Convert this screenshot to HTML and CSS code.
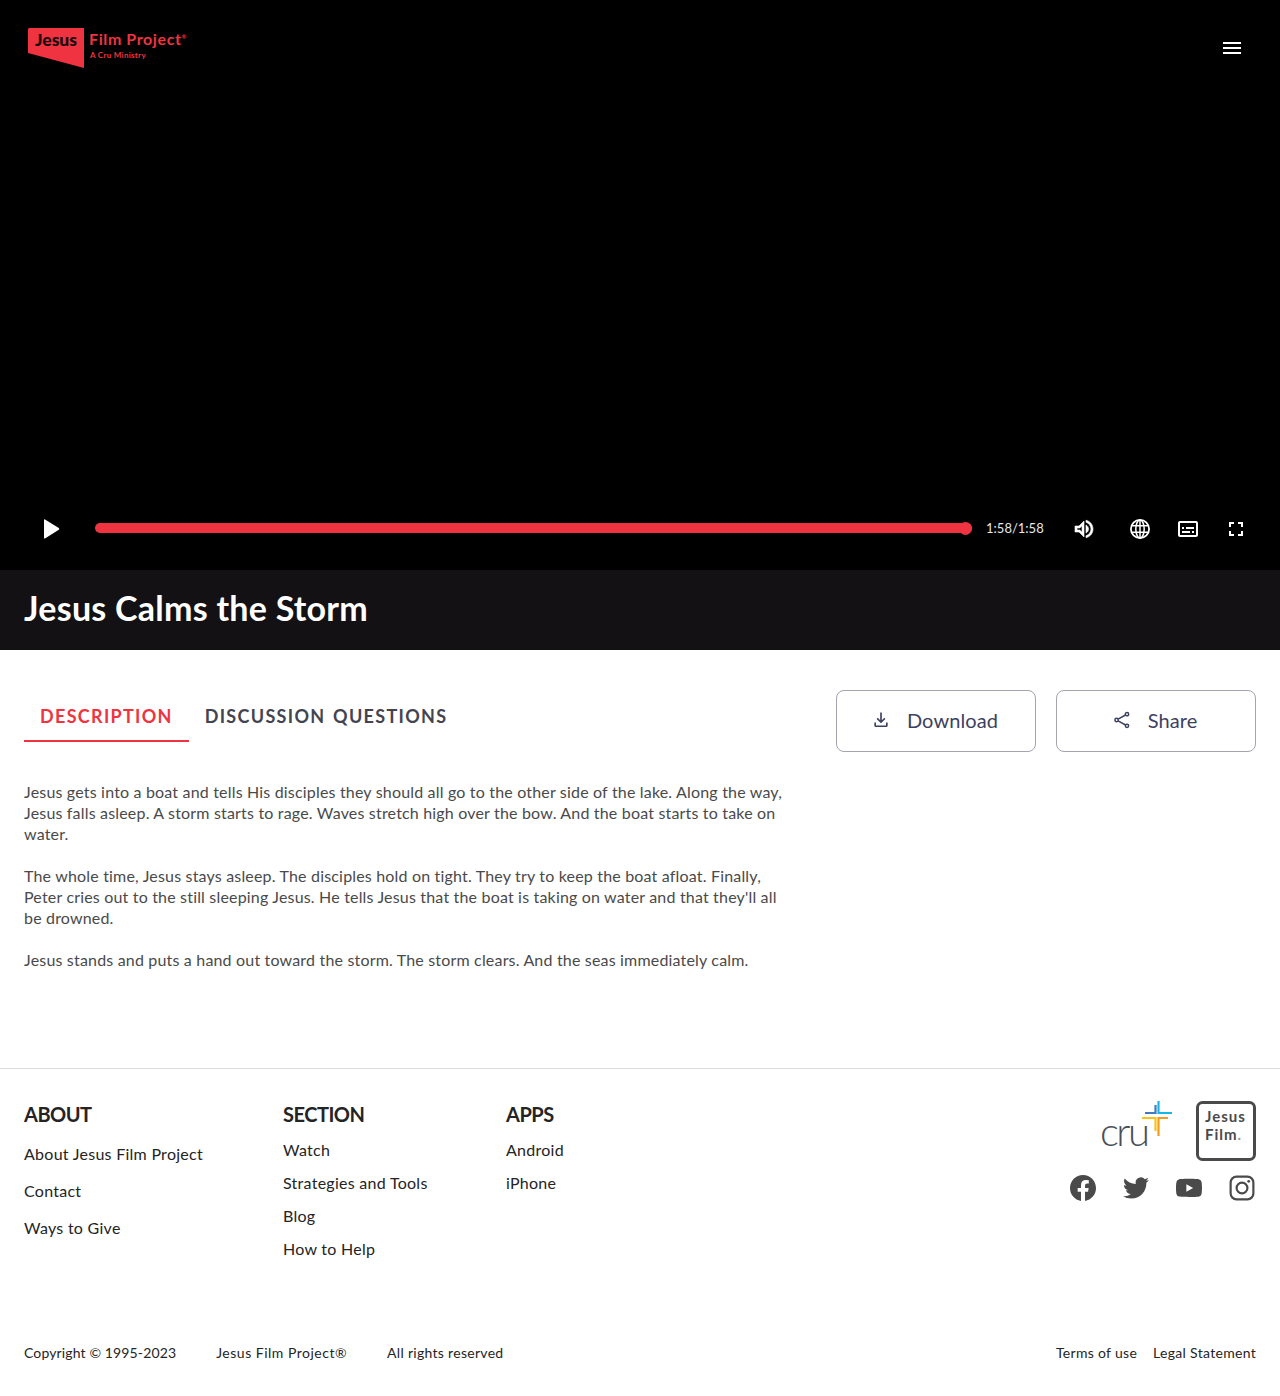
FILE: index.html
```html
<!DOCTYPE html>
<html lang="en">
<head>
    <meta charset="UTF-8">
    <meta name="viewport" content="width=device-width, initial-scale=1.0">
    <title>Jesus Calms the Storm</title>
    <link rel="stylesheet" href="styles.css">
</head>
<body>
    <div class="video">
        <div class="top-bar">
            <a class="logo" href="#">
                <span class="logo-flag"><span class="logo-jesus">Jesus</span></span>
                <span class="logo-text">
                    <span class="logo-name">Film Project<sup>®</sup></span>
                    <span class="logo-sub">A Cru Ministry</span>
                </span>
            </a>
            <button class="icon-btn menu-btn" aria-label="Menu">
                <svg width="24" height="24" viewBox="0 0 24 24" fill="#fff"><path d="M3 18h18v-2H3v2zm0-5h18v-2H3v2zm0-7v2h18V6H3z"/></svg>
            </button>
        </div>
        <div class="controls">
            <button class="icon-btn play-btn" aria-label="Play">
                <svg width="30" height="30" viewBox="0 0 30 30" fill="#fff"><path d="M8 6q0-1.200 1-.6l13.800 8.600q1 .9 0 1.800L9 24.400q-1 .6-1-.6z"/></svg>
            </button>
            <div class="progress"><span class="progress-dot"></span></div>
            <span class="time">1:58/1:58</span>
            <button class="icon-btn volume-btn" aria-label="Volume">
                <svg width="24" height="24" viewBox="0 0 24 24" fill="#fff" stroke="#fff" stroke-width=".6"><path d="M3 9v6h4l5 5V4L7 9H3zm7-.17v6.340L7.830 13H5v-2h2.830L10 8.830zM16.500 12c0-1.770-1.020-3.290-2.500-4.030v8.050c1.480-.73 2.500-2.250 2.500-4.020zM14 3.230v2.060c2.890.86 5 3.540 5 6.710s-2.110 5.850-5 6.710v2.060c4.010-.91 7-4.490 7-8.770 0-4.280-2.990-7.860-7-8.770z"/></svg>
            </button>
            <button class="icon-btn globe-btn" aria-label="Language">
                <svg width="24" height="24" viewBox="0 0 24 24" fill="none" stroke="#fff" stroke-width="1.800"><circle cx="12" cy="12" r="9.100"/><ellipse cx="12" cy="12" rx="4.200" ry="9.100" stroke-width="1.500"/><path d="M3.500 8.800h17M3.500 15.200h17M12 3v18" stroke-width="1.500"/></svg>
            </button>
            <button class="icon-btn cc-btn" aria-label="Subtitles">
                <svg width="24" height="24" viewBox="0 0 24 24" fill="#fff"><path d="M20 4H4c-1.100 0-2 .9-2 2v12c0 1.100.9 2 2 2h16c1.100 0 2-.9 2-2V6c0-1.100-.9-2-2-2zm0 14H4V6h16v12zM6 10h2v2H6v-2zm0 4h8v2H6v-2zm10 0h2v2h-2v-2zm-6-4h8v2h-8v-2z"/></svg>
            </button>
            <button class="icon-btn full-btn" aria-label="Fullscreen">
                <svg width="24" height="24" viewBox="0 0 24 24" fill="#fff"><path d="M7 14H5v5h5v-2H7v-3zm-2-4h2V7h3V5H5v5zm12 7h-3v2h5v-5h-2v3zM14 5v2h3v3h2V5h-5z"/></svg>
            </button>
        </div>
    </div>

    <div class="title-bar">
        <h1>Jesus Calms the Storm</h1>
    </div>

    <div class="content">
        <div class="main-col">
            <div class="tabs">
                <button class="tab tab-active">Description</button>
                <button class="tab">Discussion Questions</button>
            </div>
            <div class="description">
                <p>Jesus gets into a boat and tells His disciples they should all go to the other side of the lake. Along the way, Jesus falls asleep. A storm starts to rage. Waves stretch high over the bow. And the boat starts to take on water.</p>
                <p>The whole time, Jesus stays asleep. The disciples hold on tight. They try to keep the boat afloat. Finally, Peter cries out to the still sleeping Jesus. He tells Jesus that the boat is taking on water and that they'll all be drowned.</p>
                <p>Jesus stands and puts a hand out toward the storm. The storm clears. And the seas immediately calm.</p>
            </div>
        </div>
        <div class="actions">
            <button class="action-btn">
                <svg width="20" height="20" viewBox="0 0 24 24" fill="#3d4160"><path d="M11 3h2v9.200l2.900-2.900 1.400 1.400L12 16l-5.300-5.300 1.400-1.400 2.900 2.900zM4 15h2v3.500h12V15h2v3.700q0 1.800-1.800 1.800H5.800Q4 20.500 4 18.700z"/></svg>
                Download
            </button>
            <button class="action-btn">
                <svg width="20" height="20" viewBox="0 0 24 24" fill="none" stroke="#3d4160" stroke-width="1.800"><circle cx="18" cy="5" r="2"/><circle cx="5.500" cy="12" r="2"/><circle cx="18" cy="19" r="2"/><path d="M7.300 11l9-5M7.300 13l9 5"/></svg>
                Share
            </button>
        </div>
    </div>

    <footer class="footer">
        <div class="footer-top">
            <div class="footer-col col-about">
                <h3>About</h3>
                <ul class="links links-wide">
                    <li>About Jesus Film Project</li>
                    <li>Contact</li>
                    <li>Ways to Give</li>
                </ul>
            </div>
            <div class="footer-col col-section">
                <h3>Section</h3>
                <ul class="links">
                    <li>Watch</li>
                    <li>Strategies and Tools</li>
                    <li>Blog</li>
                    <li>How to Help</li>
                </ul>
            </div>
            <div class="footer-col col-apps">
                <h3>Apps</h3>
                <ul class="links">
                    <li>Android</li>
                    <li>iPhone</li>
                </ul>
            </div>
            <div class="footer-brand">
                <div class="brand-logos">
                    <div class="cru-logo">
                        <span class="cru-word">cru</span>
                        <svg class="cru-cross" width="32" height="38" viewBox="0 0 32 38" fill="none" stroke-width="2.200">
                            <path d="M5 12h10.500V4" stroke="#3d7cc0"/>
                            <path d="M18.500 0v12H32" stroke="#14b8e6"/>
                            <path d="M2 17h13.500v13" stroke="#f9c31c"/>
                            <path d="M18.500 35V17H28" stroke="#f39a1f"/>
                        </svg>
                    </div>
                    <svg class="jf-logo" width="60" height="60" viewBox="0 0 60 60">
                        <rect x="1.500" y="1.500" width="57" height="57" rx="5" fill="none" stroke="#4a4a4a" stroke-width="3"/>
                        <text class="jf-text" x="9" y="21">Jesus</text>
                        <text class="jf-text" x="9" y="39">Film<tspan fill="#999999">.</tspan></text>
                    </svg>
                </div>
                <div class="social">
                    <svg width="26" height="26" viewBox="0 0 24 24" fill="#4a4a4a"><path d="M24 12.070C24 5.400 18.630 0 12 0S0 5.400 0 12.070c0 6.030 4.390 11.020 10.130 11.930v-8.440H7.080v-3.490h3.050V9.410c0-3.020 1.790-4.690 4.530-4.690 1.310 0 2.690.24 2.690.24v2.970h-1.510c-1.490 0-1.960.93-1.960 1.880v2.260h3.330l-.53 3.490h-2.800V24C19.610 23.090 24 18.100 24 12.070z"/></svg>
                    <svg width="26" height="26" viewBox="0 0 24 24" fill="#4a4a4a"><path d="M23.950 4.570a10 10 0 0 1-2.820.77 4.960 4.960 0 0 0 2.160-2.720c-.95.550-2 .96-3.130 1.190a4.920 4.920 0 0 0-8.380 4.480C7.690 8.100 4.070 6.130 1.640 3.160a4.820 4.820 0 0 0-.67 2.480c0 1.710.87 3.210 2.190 4.100a4.900 4.900 0 0 1-2.230-.62v.06a4.920 4.920 0 0 0 3.950 4.830 5 5 0 0 1-2.210.08 4.940 4.940 0 0 0 4.600 3.420A9.870 9.870 0 0 1 0 19.540a14 14 0 0 0 7.560 2.210c9.050 0 14-7.500 14-13.980 0-.21 0-.42-.02-.63a9.940 9.940 0 0 0 2.410-2.570z"/></svg>
                    <svg width="26" height="26" viewBox="0 0 24 24" fill="#4a4a4a"><path d="M23.500 6.190a3.020 3.020 0 0 0-2.120-2.140C19.500 3.550 12 3.550 12 3.550s-7.500 0-9.380.5A3.020 3.020 0 0 0 .5 6.190C0 8.070 0 12 0 12s0 3.930.5 5.810a3.020 3.020 0 0 0 2.120 2.140c1.880.5 9.380.5 9.380.5s7.500 0 9.380-.5a3.020 3.020 0 0 0 2.120-2.140C24 15.930 24 12 24 12s0-3.930-.5-5.810zM9.550 15.570V8.430L15.820 12l-6.270 3.570z"/></svg>
                    <svg width="26" height="26" viewBox="0 0 24 24" fill="none" stroke="#4a4a4a" stroke-width="2"><rect x="1.500" y="1.500" width="21" height="21" rx="5.500"/><circle cx="12" cy="12" r="5"/><circle cx="18.200" cy="5.800" r="1.300" fill="#4a4a4a" stroke="none"/></svg>
                </div>
            </div>
        </div>
        <div class="footer-bottom">
            <span class="legal-item copy">Copyright © 1995-2023</span>
            <span class="legal-item project">Jesus Film Project®</span>
            <span class="legal-item">All rights reserved</span>
            <span class="legal-right">
                <span class="legal-item">Terms of use</span>
                <span class="legal-item">Legal Statement</span>
            </span>
        </div>
    </footer>
</body>
</html>
```

FILE: styles.css
```css
* {
    box-sizing: border-box;
}
body {
    font-family: 'Lato', sans-serif;
    background-color: #ffffff;
    color: #252424;
    margin: 0;
}
button {
    font-family: inherit;
    background: none;
    border: none;
    padding: 0;
    cursor: pointer;
}
.icon-btn {
    display: flex;
    align-items: center;
    justify-content: center;
}
.video {
    height: 570px;
    background-color: #000000;
    display: flex;
    flex-direction: column;
    justify-content: space-between;
}
.top-bar {
    display: flex;
    justify-content: space-between;
    align-items: flex-start;
    padding: 28px 36px 0 28px;
}
.logo {
    display: flex;
    gap: 5px;
    text-decoration: none;
    color: #ef3340;
}
.logo-flag {
    width: 56px;
    height: 40px;
    background-color: #ef3340;
    clip-path: polygon(1px 0, 56px 0, 56px 40px, 0 25px, 0 1px);
    padding-top: 1px;
    text-align: center;
}
.logo-jesus {
    color: #1a0a0c;
    font-size: 17.500px;
    font-weight: 900;
}
.logo-text {
    display: flex;
    flex-direction: column;
}
.logo-name {
    font-size: 16px;
    font-weight: 700;
    line-height: 22px;
    white-space: nowrap;
    letter-spacing: 0.6px;
}
.logo-name sup {
    font-size: 6px;
    line-height: 0;
}
.logo-sub {
    font-size: 8px;
    font-weight: 700;
    line-height: 9px;
    letter-spacing: 0.3px;
    margin: 1px 0 0 1px;
}
.menu-btn {
    margin-top: 8px;
}
.controls {
    display: flex;
    align-items: center;
    height: 82px;
    padding: 0 32px 0 36px;
}
.play-btn {
    width: 30px;
}
.progress {
    width: 878px;
    height: 10px;
    margin: 0 0 2px 29px;
    background-color: #ef3340;
    border-radius: 5px;
    display: flex;
    justify-content: flex-end;
    align-items: center;
}
.progress-dot {
    width: 13px;
    height: 13px;
    border-radius: 50%;
    background-color: #ef3340;
}
.time {
    width: 58px;
    margin: 0 0 2px 14px;
    color: #e8e8e8;
    font-size: 13px;
    white-space: nowrap;
}
.volume-btn {
    margin-left: 28px;
}
.globe-btn {
    margin-left: 32px;
}
.cc-btn,
.full-btn {
    margin-left: 24px;
}
.title-bar {
    height: 80px;
    background-color: #131114;
    padding: 0 24px 5px;
    display: flex;
    align-items: center;
}
.title-bar h1 {
    margin: 0;
    color: #ffffff;
    font-size: 34px;
    font-weight: 700;
    letter-spacing: 0.25px;
}
.content {
    height: 418px;
    display: flex;
    justify-content: space-between;
    padding: 40px 24px 0;
}
.main-col {
    width: 765px;
}
.tabs {
    display: flex;
}
.tab {
    height: 52px;
    padding: 2px 16px 0;
    font-size: 18px;
    font-weight: 700;
    letter-spacing: 1.300px;
    text-transform: uppercase;
    color: #444451;
    word-spacing: 2px;
    border-bottom: 2px solid transparent;
}
.tab-active {
    color: #ef3340;
    border-bottom-color: #ef3340;
}
.description {
    margin-top: 39px;
    color: #4a4a4a;
    font-size: 16px;
    line-height: 21px;
    letter-spacing: 0.18px;
}
.description p {
    margin: 0 0 21px;
}
.actions {
    display: flex;
    gap: 20px;
}
.action-btn {
    width: 200px;
    height: 62px;
    border: 1px solid #a4a3b0;
    border-radius: 8px;
    color: #3d4160;
    font-size: 20px;
    letter-spacing: 0.1px;
    display: flex;
    align-items: center;
    justify-content: center;
    gap: 16px;
    padding: 0 3px 2px 0;
}
.footer {
    border-top: 1px solid #dcdcdc;
    padding: 32px 24px 0;
}
.footer-top {
    display: flex;
    height: 243px;
}
.footer-col h3 {
    margin: 0;
    font-size: 20px;
    font-weight: 700;
    line-height: 26px;
    letter-spacing: -0.5px;
    text-transform: uppercase;
    color: #252424;
}
.col-about {
    width: 259px;
}
.col-section {
    width: 223px;
}
.links {
    list-style: none;
    margin: 6px 0 0;
    padding: 0;
    font-size: 16px;
    letter-spacing: 0.27px;
    line-height: 33px;
}
.links-wide {
    margin-top: 8px;
    line-height: 37px;
}
.footer-brand {
    margin-left: auto;
    display: flex;
    flex-direction: column;
    align-items: flex-end;
}
.brand-logos {
    display: flex;
    align-items: flex-start;
    gap: 24px;
}
.cru-logo {
    width: 72px;
    height: 46px;
    display: flex;
    align-items: flex-end;
    position: relative;
}
.cru-word {
    font-size: 40px;
    line-height: 40px;
    font-weight: 300;
    color: #4a4f55;
    letter-spacing: -2.500px;
    margin-bottom: -4px;
}
.cru-cross {
    position: absolute;
    right: 0;
    top: 0;
}
.jf-logo {
    display: block;
}
.jf-text {
    fill: #4a4a4a;
    font-size: 15px;
    font-weight: 700;
    letter-spacing: 1px;
}
.social {
    display: flex;
    gap: 27px;
    margin: 14px 1px 0 0;
}
.footer-bottom {
    display: flex;
    align-items: center;
    font-size: 14px;
    letter-spacing: 0.3px;
}
.legal-item {
    margin-right: 40px;
}
.copy {
    letter-spacing: 0.13px;
}
.project {
    letter-spacing: 0.5px;
}
.legal-right {
    margin-left: auto;
    display: flex;
    gap: 16px;
}
.legal-right .legal-item {
    margin-right: 0;
}
```
